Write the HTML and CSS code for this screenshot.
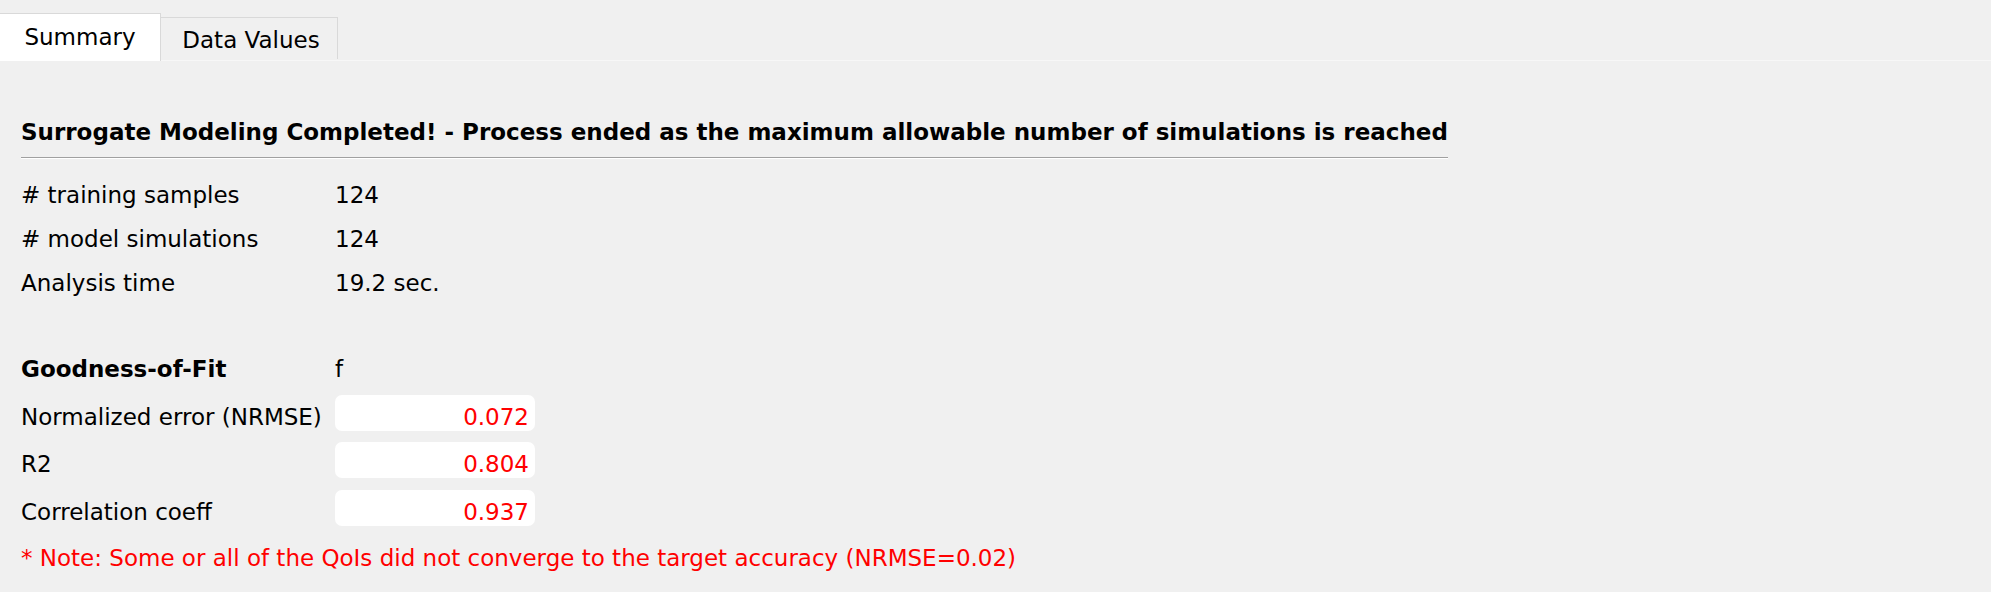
FILE: index.html
```html
<!DOCTYPE html>
<html lang="en">
<head>
<meta charset="utf-8">
<title>Summary</title>
<link rel="stylesheet" href="styles.css">
</head>
<body>
<div class="tabs">
  <div class="tab active">Summary</div>
  <div class="tab">Data Values</div>
</div>
<div class="content">
  <div class="title">Surrogate Modeling Completed! - Process ended as the maximum allowable number of simulations is reached</div>
  <div class="grid stats">
    <div class="label">#&nbsp;training samples</div><div class="value">124</div>
    <div class="label">#&nbsp;model simulations</div><div class="value">124</div>
    <div class="label">Analysis time</div><div class="value">19.2 sec.</div>
  </div>
  <div class="grid fit">
    <div class="label bold">Goodness-of-Fit</div><div class="value">f</div>
    <div class="label">Normalized error (NRMSE)</div><div class="box">0.072</div>
    <div class="label">R2</div><div class="box">0.804</div>
    <div class="label">Correlation coeff</div><div class="box">0.937</div>
  </div>
  <div class="note">* Note: Some or all of the QoIs did not converge to the target accuracy (NRMSE=0.02)</div>
</div>
</body>
</html>
```
FILE: styles.css
```css
html, body {
  margin: 0;
  padding: 0;
  background: #f0f0f0;
}
body {
  font-family: "DejaVu Sans", sans-serif;
  font-size: 23px;
  color: #000;
  width: 1991px;
  height: 592px;
  overflow: hidden;
}
.tabs {
  display: flex;
  align-items: flex-start;
  height: 61px;
  box-sizing: border-box;
  padding-top: 13px;
  border-bottom: 1px solid #f7f7f7;
}
.tab {
  box-sizing: border-box;
  height: 42px;
  margin-top: 4px;
  width: 177px;
  padding-left: 4px;
  text-align: center;
  line-height: 45px;
  background: #f0f0f0;
  border-top: 1px solid #d9d9d9;
  border-right: 1px solid #d9d9d9;
}
.tab.active {
  width: 161px;
  height: 48px;
  margin-top: 0;
  padding-left: 0;
  line-height: 46px;
  background: #fff;
}
.content {
  padding: 53px 0 0 21px;
}
.title {
  display: inline-block;
  font-weight: bold;
  line-height: 36px;
  padding-bottom: 7px;
  border-bottom: 1px solid #a0a0a0;
  box-shadow: 0 1px 0 #fff;
  white-space: nowrap;
}
.grid {
  display: grid;
  grid-template-columns: 314px 200px;
}
.stats {
  margin-top: 15px;
  grid-auto-rows: 44px;
  line-height: 44px;
}
.fit {
  margin-top: 41px;
  grid-auto-rows: 47.5px;
  line-height: 47.5px;
}
.bold {
  font-weight: bold;
}
.box {
  box-sizing: border-box;
  height: 36px;
  margin-top: 1px;
  padding: 8px 6px 0 0;
  line-height: 28px;
  background: #fff;
  border-radius: 7px;
  text-align: right;
  color: #ff0000;
}
.note {
  margin-top: 7px;
  line-height: 30px;
  color: #ff0000;
}
```
